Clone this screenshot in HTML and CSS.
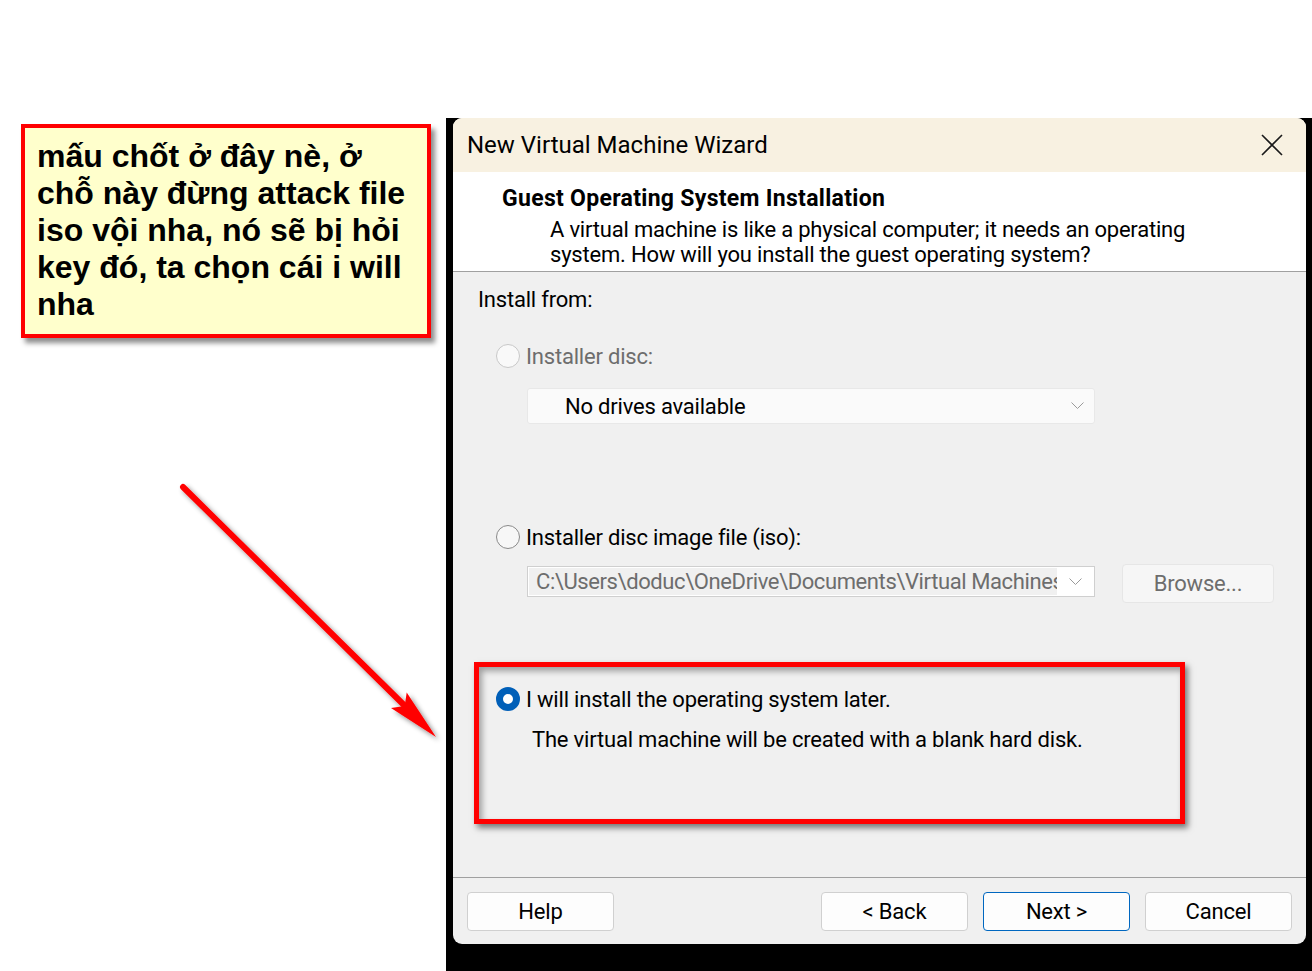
FILE: index.html
```html
<!DOCTYPE html>
<html>
<head>
<meta charset="utf-8">
<link rel="stylesheet" href="styles.css">
</head>
<body>
<div class="page">
  <div class="left">
    <div class="note">mấu chốt ở đây nè, ở<br>chỗ này đừng attack file<br>iso vội nha, nó sẽ bị hỏi<br>key đó, ta chọn cái i will<br>nha</div>
    <svg class="arrow" width="446" height="420" viewBox="0 0 446 420">
      <defs>
        <filter id="sh" x="-20%" y="-20%" width="140%" height="140%">
          <feDropShadow dx="3" dy="3" stdDeviation="2.5" flood-color="#000" flood-opacity="0.45"/>
        </filter>
      </defs>
      <g filter="url(#sh)">
        <line x1="183" y1="149" x2="406" y2="369" stroke="#ff0000" stroke-width="6" stroke-linecap="round"/>
        <polygon points="436,399 391,370 404.7,368 406.7,354.6" fill="#ff0000"/>
      </g>
    </svg>
  </div>
  <div class="shot">
    <div class="window">
      <div class="titlebar">
        <span class="title">New Virtual Machine Wizard</span>
        <svg class="close" width="22" height="22" viewBox="0 0 22 22"><path d="M1 1 L21 21 M21 1 L1 21" stroke="#1a1a1a" stroke-width="1.6"/></svg>
      </div>
      <div class="header">
        <div class="h-title">Guest Operating System Installation</div>
        <div class="h-desc">A virtual machine is like a physical computer; it needs an operating<br>system. How will you install the guest operating system?</div>
      </div>
      <div class="body">
        <div class="label-from">Install from:</div>
        <div class="radio-row disabled r1"><span class="radio"></span><span>Installer disc:</span></div>
        <div class="select dis-select"><span>No drives available</span><svg class="chev" width="13" height="8" viewBox="0 0 13 8"><path d="M0.5 0.5 L6.5 6.5 L12.5 0.5" fill="none" stroke="#9a9a9a" stroke-width="1"/></svg></div>
        <div class="radio-row r2"><span class="radio"></span><span>Installer disc image file (iso):</span></div>
        <div class="iso-row">
          <div class="combo"><span class="combo-text">C:\Users\doduc\OneDrive\Documents\Virtual Machines\windows</span><svg class="chev" width="13" height="8" viewBox="0 0 13 8"><path d="M0.5 0.5 L6.5 6.5 L12.5 0.5" fill="none" stroke="#9a9a9a" stroke-width="1"/></svg></div>
          <div class="browse">Browse...</div>
        </div>
        <div class="radio-row r3"><span class="radio checked"></span><span>I will install the operating system later.</span></div>
        <div class="later-desc">The virtual machine will be created with a blank hard disk.</div>
        <div class="highlight"></div>
      </div>
      <div class="footer">
        <div class="btn">Help</div>
        <div class="spacer"></div>
        <div class="btn">&lt; Back</div>
        <div class="btn primary">Next &gt;</div>
        <div class="btn">Cancel</div>
      </div>
    </div>
  </div>
</div>
</body>
</html>
```
FILE: styles.css
```css
html, body {
  margin: 0;
  padding: 0;
  background: #ffffff;
}
.page {
  display: flex;
  width: 1312px;
  height: 971px;
  overflow: hidden;
}
.left {
  width: 446px;
  flex: none;
  display: flex;
  flex-direction: column;
}
.note {
  margin: 124px 0 0 21px;
  width: 410px;
  height: 214px;
  box-sizing: border-box;
  border: 4px solid #ff0000;
  background: #ffffcc;
  box-shadow: 4px 5px 5px rgba(0,0,0,0.45);
  padding: 10px 4px 0 12px;
  font-family: "Liberation Sans", Arial, sans-serif;
  font-weight: bold;
  font-size: 32px;
  line-height: 37px;
  color: #000;
  white-space: nowrap;
}
.arrow {
  display: block;
  flex: none;
}
.shot {
  margin-top: 118px;
  width: 866px;
  height: 853px;
  background: #000;
  padding: 0 6px 0 7px;
  box-sizing: border-box;
  flex: none;
}
.window {
  width: 853px;
  height: 826px;
  border-radius: 9px;
  overflow: hidden;
  background: #f0f0f0;
  display: flex;
  flex-direction: column;
  font-family: Roboto, "Noto Sans", sans-serif;
  color: #000;
  font-size: 22px;
  letter-spacing: -0.2px;
}
.titlebar {
  height: 54px;
  flex: none;
  background: #f8f1e1;
  display: flex;
  align-items: center;
  padding: 0 23px 0 14px;
}
.title {
  flex: 1;
  font-size: 24px;
  letter-spacing: 0;
}
.close { display: block; }
.header {
  height: 100px;
  flex: none;
  background: #fff;
  border-bottom: 1px solid #a0a0a0;
  box-sizing: border-box;
  padding: 13px 0 0 49px;
}
.h-title {
  font-weight: bold;
  font-size: 23px;
  letter-spacing: 0.3px;
  line-height: 27px;
}
.h-desc {
  margin: 5px 0 0 48px;
  line-height: 25px;
}
.body {
  flex: 1;
  position: relative;
  display: flex;
  flex-direction: column;
  padding-left: 25px;
}
.label-from {
  margin-top: 13px;
  line-height: 30px;
}
.radio-row {
  display: flex;
  align-items: center;
  height: 30px;
  margin-left: 18px;
}
.radio {
  width: 22px;
  height: 22px;
  border-radius: 50%;
  border: 1.5px solid #8a8a8a;
  background: #f7f7f7;
  margin-right: 6px;
  flex: none;
}
.disabled { color: #6d6d6d; }
.disabled .radio { border-color: #c8c8c8; background: #f9f9f9; }
.radio.checked {
  background: #ffffff;
  border: 7px solid #005fb8;
  width: 10px;
  height: 10px;
}
.r1 { margin-top: 26px; }
.r2 { margin-top: 98px; }
.r3 { margin-top: 81px; }
.select {
  margin: 17px 0 0 49px;
  width: 568px;
  height: 36px;
  box-sizing: border-box;
  background: #fafafa;
  border: 1px solid #e8e8e8;
  border-radius: 3px;
  display: flex;
  align-items: center;
  padding: 0 10px 0 37px;
}
.select span { flex: 1; }
.chev { display: block; flex: none; }
.iso-row {
  display: flex;
  align-items: flex-start;
  margin: 12px 0 0 49px;
}
.combo {
  margin-top: 2px;
  width: 568px;
  height: 31px;
  box-sizing: border-box;
  background: #fff;
  border: 1px solid #cfcfcf;
  display: flex;
  align-items: center;
  padding: 1px 12px 1px 1px;
}
.combo-text {
  flex: 1;
  height: 100%;
  background: #f0f0f0;
  color: #6d6d6d;
  white-space: nowrap;
  overflow: hidden;
  padding-left: 7px;
  margin-right: 12px;
  line-height: 27px;
  letter-spacing: -0.4px;
}
.browse {
  margin-left: 27px;
  width: 152px;
  height: 39px;
  box-sizing: border-box;
  background: #f6f6f6;
  border: 1px solid #e6e6e6;
  border-radius: 4px;
  color: #6d6d6d;
  display: flex;
  align-items: center;
  justify-content: center;
}
.later-desc {
  margin: 11px 0 0 54px;
  line-height: 30px;
}
.highlight {
  position: absolute;
  left: 21px;
  top: 390px;
  width: 711px;
  height: 162px;
  box-sizing: border-box;
  border: 5px solid #ff0000;
  box-shadow: 3px 4px 6px rgba(0,0,0,0.5), inset 3px 4px 6px rgba(0,0,0,0.35);
}
.footer {
  height: 67px;
  flex: none;
  border-top: 1px solid #a0a0a0;
  box-sizing: border-box;
  display: flex;
  align-items: flex-start;
  padding: 14px 14px 0 14px;
  gap: 15px;
}
.spacer { flex: 1; }
.btn {
  width: 147px;
  height: 39px;
  box-sizing: border-box;
  background: #fdfdfd;
  border: 1px solid #d0d0d0;
  border-radius: 4px;
  display: flex;
  align-items: center;
  justify-content: center;
}
.btn.primary {
  border-color: #0067c0;
}
```
